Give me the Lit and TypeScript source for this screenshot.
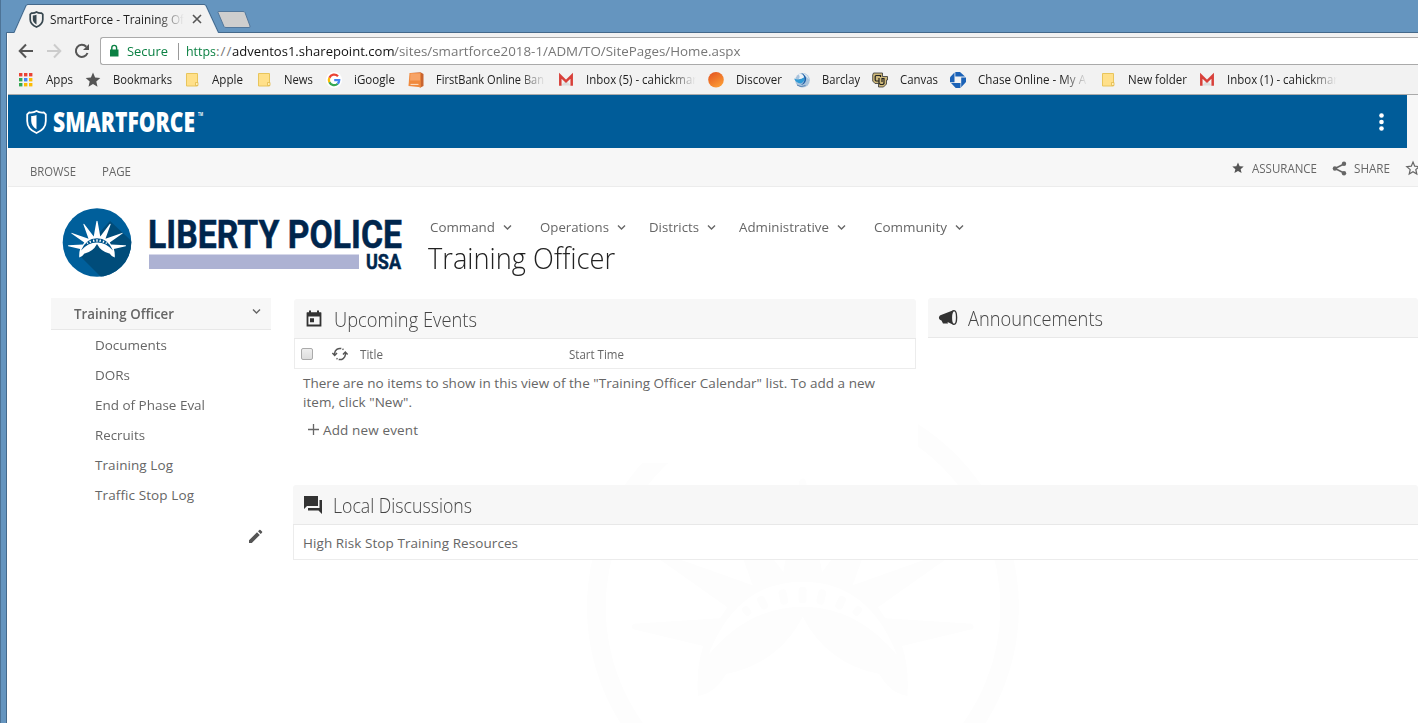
import { LitElement, html, css, svg, nothing } from "lit";
import { customElement, property } from "lit/decorators.js";

/* Single-line label fitted to a given width: condensed when too long, tracked out when too short. */
@customElement("fit-label")
class FitLabel extends LitElement {
  @property() text = "";
  @property({ type: Number }) w = 0;
  static styles = css`
    :host { display: block; white-space: pre; flex: none; }
    span { display: inline-block; transform-origin: 0 50%; }
  `;
  updated() {
    const s = this.renderRoot.querySelector("span") as HTMLElement;
    s.style.letterSpacing = "0";
    s.style.transform = "none";
    const natural = s.getBoundingClientRect().width;
    if (natural > this.w) {
      s.style.transform = `scaleX(${this.w / natural})`;
    } else {
      s.style.letterSpacing = `${(this.w - natural) / Math.max(1, this.text.length - 1)}px`;
    }
    this.style.width = `${this.w}px`;
  }
  render() {
    return html`<span>${this.text}</span>`;
  }
}

const crown = svg`
  <path d="M384 888 Q378 800 400 738 L190 688 Q180 680 190 671 L450 655 L472 622 L246 462 Q240 448 256 452 L548 556 L456 300 Q460 284 472 296 L640 516 L688 244 Q698 226 708 244 L756 516 L924 296 Q936 284 940 300 L848 556 L1140 452 Q1156 448 1150 462 L924 622 L946 655 L1206 671 Q1216 680 1206 688 L996 738 Q1018 800 1012 888 Q960 880 928 822 Q770 790 698 650 Q626 790 468 822 Q436 880 384 888Z"/>`;
const band = svg`<path d="M415 765 Q500 545 698 545 Q896 545 981 765 Q860 620 698 620 Q536 620 415 765Z"/>`;
const beads = svg`
  <rect x="686" y="560" width="24" height="50" rx="11"/>
  <rect x="742" y="568" width="24" height="46" rx="11" transform="rotate(12 754 590)"/>
  <rect x="628" y="568" width="24" height="46" rx="11" transform="rotate(-12 640 590)"/>
  <rect x="800" y="587" width="24" height="42" rx="11" transform="rotate(24 812 608)"/>
  <rect x="566" y="587" width="24" height="42" rx="11" transform="rotate(-28 578 608)"/>
  <rect x="851" y="618" width="22" height="30" rx="10" transform="rotate(38 862 633)"/>
  <rect x="519" y="618" width="22" height="30" rx="10" transform="rotate(-38 530 633)"/>`;

const folder = html`<svg width="16" height="16" viewBox="0 0 16 16"><path d="M2.500 1.500h11v12.500h-11z" fill="#ffe08a" stroke="#e8c55c"/><path d="M11.500 10.500h2.500v3h-2.500z" fill="#fff0b8" stroke="#e3b94a" stroke-width=".8"/></svg>`;
const gmail = html`<svg width="16" height="16" viewBox="0 0 16 16"><path d="M1.500 3h13v10.500h-13z" fill="#f1f1f1"/><path d="M3 13.500L8 8.500l5 5z" fill="#ddd"/><path d="M2.300 13.800V3.800L8 9.300l5.700-5.500v10" fill="none" stroke="#d8403a" stroke-width="2.500"/></svg>`;
const dots = ["#ea4335", "#ea4335", "#ea4335", "#34a853", "#4285f4", "#fbbc05", "#34a853", "#fbbc05", "#fbbc05"];

const bookmarks: { t: string; w: number; icon: unknown; box?: number }[] = [
  { t: "Apps", w: 27, icon: html`<svg width="16" height="16">${dots.map((c, i) => svg`<rect x=${1 + (i % 3) * 5} y=${1 + Math.floor(i / 3) * 5} width="3.400" height="3.400" fill=${c}/>`)}</svg>` },
  { t: "Bookmarks", w: 59, icon: html`<svg width="16" height="16" viewBox="0 0 16 16"><path d="M8 .6l2.100 4.900 5.200.5-4 3.400 1.200 5.300L8 11.900l-4.500 2.800 1.200-5.300-4-3.400 5.200-.5z" fill="#555"/></svg>` },
  { t: "Apple", w: 31, box: 32, icon: folder },
  { t: "News", w: 29, box: 30, icon: folder },
  { t: "iGoogle", w: 41, box: 42, icon: html`<svg width="16" height="16" viewBox="0 0 16 16"><circle cx="8" cy="8" r="8" fill="#fff"/><g fill="none" stroke-width="2.300"><path d="M12 4.300A5.200 5.200 0 0 0 3.400 5.800" stroke="#ea4335"/><path d="M3.400 5.800a5.200 5.200 0 0 0 0 4.500" stroke="#fbbc05"/><path d="M3.400 10.300a5.200 5.200 0 0 0 8.300 1.400" stroke="#34a853"/><path d="M11.700 11.700A5.200 5.200 0 0 0 13.200 8.200H8.200" stroke="#4285f4"/></g></svg>` },
  { t: "FirstBank Online Ban", w: 108, box: 110, icon: html`<svg width="16" height="16" viewBox="0 0 16 16"><path d="M2.500 1l10-.7 3 1.700v12l-3.500 1.700z" fill="#c8642f"/><path d="M1.500 1h11.300v14.200L.5 14z" fill="#f08a3e"/><path d="M2.500 1.500h9.500v7H2z" fill="#f7a468"/><path d="M2.500 12.400h8" stroke="#fde3cf"/></svg>` },
  { t: "Inbox (5) - cahickmar", w: 111, box: 110, icon: gmail },
  { t: "Discover", w: 46, icon: html`<svg width="16" height="16" viewBox="0 0 16 16"><defs><linearGradient id="dg" x1="0" y1="0" x2=".6" y2="1"><stop offset="0" stop-color="#e2501f"/><stop offset="1" stop-color="#fb9a35"/></linearGradient></defs><circle cx="8" cy="7.800" r="7.800" fill="url(#dg)"/></svg>` },
  { t: "Barclay", w: 38, icon: html`<svg width="16" height="16" viewBox="0 0 16 16"><circle cx="8.500" cy="8.300" r="7.300" fill="#a9c3dc"/><path d="M9 1.500q5 1 6 6-2-3-5-3.500z" fill="#dce8f2"/><path d="M0 6.500Q5 9 10.500 5q.8 4-3.500 6.500Q2 11 0 6.500z" fill="#2f9ad6"/><path d="M4 1.500q5 0 6.500 3.500Q8 7 4.500 7.300 7 5 4 1.500z" fill="#e9f1f8"/><path d="M7 .8q6 2.700 5 7.500-.8 4-5.500 4.900 4-2.500 4-6T7 .8z" fill="#1b5fa8"/><path d="M3 13q4 3 8.500.5" fill="none" stroke="#5b86b4"/></svg>` },
  { t: "Canvas", w: 38, icon: html`<svg width="16" height="16" viewBox="0 0 16 16"><path d="M1.500 1h9v3.500h5V8h-1v4l-3 3h-5v-3.500H3L.7 9V3z" fill="#cdb87a" stroke="#333" stroke-width=".8"/><path d="M8.500 5V3.500H4L3.200 4.500V8L4 9h3M7 6v5.500l1.500 1h2.500l1-1V6.500H10V10" fill="none" stroke="#222" stroke-width="1.200"/></svg>` },
  { t: "Chase Online - My A", w: 108, box: 110, icon: html`<svg width="16" height="16" viewBox="0 0 16 16"><g fill="#1b62b7"><path d="M5.300 0H10l5 4.500H5.300z"/><path d="M11.200 5.500H16V10l-4.800 5.300z"/><path d="M10.500 11v5H5.700L1 11z"/><path d="M4.500 10.300H0V5.200L4.500.6z"/></g></svg>` },
  { t: "New folder", w: 59, icon: folder },
  { t: "Inbox (1) - cahickmar", w: 111, box: 110, icon: gmail },
];

const nav = [
  { t: "Command", w: 65, pad: 27.5 },
  { t: "Operations", w: 69, pad: 23.5 },
  { t: "Districts", w: 50, pad: 23 },
  { t: "Administrative", w: 90, pad: 27.5 },
  { t: "Community", w: 73, pad: 0 },
];
const side = [
  { t: "Documents", w: 72 },
  { t: "DORs", w: 35 },
  { t: "End of Phase Eval", w: 110 },
  { t: "Recruits", w: 50 },
  { t: "Training Log", w: 78 },
  { t: "Traffic Stop Log", w: 99 },
];

@customElement("app-root")
class AppRoot extends LitElement {
  static styles = css`
    :host { display: block; width: 1418px; height: 723px; overflow: hidden; font-family: "Open Sans", "Noto Sans", sans-serif; font-size: 13.500px; color: #666; background: #6595bf; }
    * { box-sizing: border-box; }
    svg { display: block; flex: none; overflow: visible; }
    .tabs { height: 33px; position: relative; }
    .tabshape { position: absolute; left: 0; top: 0; }
    .tab { position: relative; display: flex; align-items: center; height: 33px; padding: 5px 0 0 29px; color: #222; font-size: 12px; }
    .tab .fade { margin: 0 8px 0 6px; width: 134px; }
    .fade { overflow: hidden; -webkit-mask-image: linear-gradient(90deg, #000 calc(100% - 26px), transparent); }
    .frame { display: flex; height: 690px; }
    .edge { width: 8px; flex: none; background: linear-gradient(90deg, #4d7396 0 1px, #6595bf 1px 6px, #45698b 6px 7px, #fff 7px 8px); }
    .win { flex: 1; min-width: 0; background: #fff; }
    .toolbar { height: 32px; background: #f2f2f2; display: flex; align-items: center; padding: 4px 0 0 10px; }
    .toolbar > svg { margin-right: 12px; }
    .omni { flex: 1; margin-left: -2px; height: 28px; background: #fff; border: 1px solid #aaa; border-right: 0; border-radius: 3px 0 0 3px; display: flex; align-items: center; font-size: 13.500px; padding-left: 8px; line-height: 20px; }
    .green { color: #0b8043; }
    .grey { color: #777; }
    .black { color: #111; }
    .sep { width: 1px; height: 17px; background: #999; margin: 0 7px 0 10px; }
    .sec { margin-left: 8px; }
    .marks { height: 30px; background: #f2f2f2; border-bottom: 1px solid #aaa; display: flex; align-items: center; padding-left: 10px; font-size: 12px; color: #222; }
    .mark { display: flex; align-items: center; gap: 12px; margin-right: 12px; flex: none; }
    .brand { height: 53px; background: #f7f7f7; }
    .blue { width: 1399px; height: 53px; background: #005c99; display: flex; align-items: center; justify-content: space-between; padding: 0 23.500px 0 18px; }
    .ribbon { height: 39px; background: #f7f7f7; border-bottom: 1px solid #ececec; display: flex; align-items: center; font-size: 12.500px; padding: 8px 0 0 22px; }
    .ribbon .page { margin-left: 26px; }
    .acts { margin: -6px -3px 0 auto; display: flex; align-items: center; }
    .a1 { margin-left: 8px; margin-right: 15px; }
    .a2 { margin-left: 7px; margin-right: 15px; }
    .site { height: 536px; position: relative; overflow: hidden; }
    .wm { position: absolute; left: 562px; top: 213px; }
    .masthead { position: relative; display: flex; padding: 18px 0 0 52px; height: 111px; }
    .titles { padding: 12px 0 0 17px; }
    .nav { display: flex; height: 20px; align-items: center; }
    .nav fit-label { margin-right: 8px; }
    .h1 { font-size: 29.500px; font-weight: 300; color: #222; line-height: 36px; margin: 3px 0 0 -2px; }
    .cols { position: relative; display: flex; }
    .side { width: 220px; margin-left: 43px; flex: none; }
    .top { height: 32px; background: #f7f7f7; border-bottom: 1px solid #e8e8e8; display: flex; justify-content: space-between; align-items: center; padding: 0 9px 0 23px; font-weight: 600; }
    .top svg { margin-top: -4px; }
    .items { padding-left: 44px; }
    .items fit-label { height: 30px; line-height: 30px; }
    .pencil { margin: 19px 0 0 197px; }
    .main { flex: 1; margin-left: 22px; min-width: 0; }
    .row { display: flex; height: 187px; }
    .events { width: 625px; padding: 1px 2px 0 1px; height: 165px; background: #fff; flex: none; }
    .ph { height: 40px; background: #f7f7f7; border-bottom: 1px solid #e8e8e8; border-radius: 3px 3px 0 0; display: flex; align-items: center; font-size: 21px; font-weight: 300; color: #444; line-height: 30px; }
    .ph svg { margin: 0 10px; }
    .ph fit-label { margin-top: 1px; margin-left: -.500px; }
    .th { height: 30px; border: 1px solid #ececec; border-top: 0; display: flex; align-items: center; font-size: 12px; padding: 1px 0 0 6px; }
    .cb { width: 12px; height: 12px; border: 1px solid #aaa; border-radius: 2px; background: linear-gradient(#eee, #ddd); margin-right: 19px; }
    .th svg { margin-right: 12px; }
    .st { margin-left: 185.500px; }
    .empty { padding: 5px 0 0 9px; line-height: 19px; }
    .add { display: flex; align-items: center; height: 20px; margin: 8px 0 0 14px; }
    .add svg { margin: -2px 4px 0 0; }
    .ann { flex: 1; margin-left: 10px; }
    .local { background: #fff; }
    .topic { height: 35px; border: 1px solid #ececec; border-width: 0 0 1px 1px; display: flex; align-items: center; padding: 2px 0 0 9px; }
  `;

  chev(w = 9) {
    return html`<svg width=${w} height="7" viewBox="0 0 9 7"><path d="M1 1.500L4.500 5 8 1.500" fill="none" stroke="#666" stroke-width="1.400"/></svg>`;
  }
  shield(w: number, h: number, stroke: string) {
    return html`<svg width=${w} height=${h} viewBox="0 0 21 24"><path d="M10.500 1.300C8.500 2.600 5.500 3.200 3.400 2.900L1.600 4.600V12c0 5 4 8.500 8.900 10.700 4.900-2.200 8.900-5.700 8.900-10.700V4.600l-1.800-1.700c-2.100.3-5.100-.3-7.100-1.600z" fill="none" stroke=${stroke} stroke-width="2.400"/><path d="M10.500 5.200C8.700 6 7 6.200 5.300 6.200V12c0 3.200 2.300 5.300 5.200 6.900z" fill=${stroke}/></svg>`;
  }

  render() {
    return html`
      <div class="tabs">
        <svg class="tabshape" width="1418" height="33">
          <path d="M0 0v33" stroke="#4d7396" stroke-width="2"/>
          <path d="M6.500 33V32.500H14L26 5.500q.5-1 2-1H204q1.500 0 2 1L218.500 32.500H1418" fill="none" stroke="#45698b"/>
          <path d="M14.500 33L26.500 6q.5-1 2-1H203.500q1.500 0 2 1L218 33z" fill="#f2f2f2"/>
          <path d="M218 12.500q-.5-1 1-1h24q1.500 0 2 1l5 13.500q.5 1.500-1 1.500h-23q-1.500 0-2-1z" fill="#cecece" stroke="#52779b"/>
        </svg>
        <div class="tab">
          ${this.shield(15, 17, "#37474f")}
          <div class="fade"><fit-label text="SmartForce - Training Offi" w="141"></fit-label></div>
          <svg width="10" height="10"><path d="M1 1l8 8M9 1L1 9" stroke="#555" stroke-width="1.600"/></svg>
        </div>
      </div>
      <div class="frame">
        <div class="edge"></div>
        <div class="win">
          <div class="toolbar">
            <svg width="16" height="16"><path d="M15 8H2M8 1.500L1.700 8 8 14.500" fill="none" stroke="#555" stroke-width="2"/></svg>
            <svg width="16" height="16"><path d="M1 8h13M8 1.500L14.300 8 8 14.500" fill="none" stroke="#ccc" stroke-width="2"/></svg>
            <svg width="16" height="16"><path d="M13.500 10A6 6 0 1 1 12.300 3.800" fill="none" stroke="#555" stroke-width="2"/><path d="M15 1v6H9z" fill="#555"/></svg>
            <div class="omni">
              <svg width="10" height="14" viewBox="0 0 10 14"><path d="M1 5.500h8.500V12.500H1z" fill="#0b8043"/><path d="M2.800 6V3.800a2.400 2.400 0 0 1 4.800 0V6" fill="none" stroke="#0b8043" stroke-width="1.400"/></svg>
              <fit-label class="green sec" text="Secure" w="41"></fit-label>
              <div class="sep"></div>
              <fit-label class="green" text="https" w="30"></fit-label>
              <fit-label class="grey" text="://" w="15.500"></fit-label>
              <fit-label class="black" text="adventos1.sharepoint.com" w="162.500"></fit-label>
              <fit-label class="grey" text="/sites/smartforce2018-1/ADM/TO/SitePages/Home.aspx" w="346.500"></fit-label>
            </div>
          </div>
          <div class="marks">
            ${bookmarks.map(
              (b) => html`<div class="mark">${b.icon}
                <div class=${(b.box ?? b.w) >= 110 ? "fade" : ""} style="width:${b.box ?? b.w}px"><fit-label text=${b.t} w=${b.w}></fit-label></div>
              </div>`
            )}
          </div>
          <div class="brand"><div class="blue">
            <svg width="180" height="30" viewBox="0 0 180 30">
              <path d="M10.500 4C8.500 5.300 5.500 5.800 3.200 5.500L1.200 7.300V14c0 6 4 9.800 9.300 12 5.300-2.200 9.300-6 9.300-12V7.300l-2-1.800C15.500 5.800 12.500 5.300 10.500 4z" fill="none" stroke="#fff" stroke-width="1.800"/>
              <path d="M10.500 8C9 8.700 7 9 5.200 9v5c0 3.500 2.200 6.500 5.300 8.200z" fill="#fff"/>
              <text x="27" y="25" textLength="142" lengthAdjust="spacingAndGlyphs" font-size="28" font-weight="800" font-family="Open Sans" fill="#fff">SMARTFORCE</text>
              <text x="172" y="9" textLength="5" lengthAdjust="spacingAndGlyphs" font-size="4.500" font-weight="700" fill="#fff">TM</text>
            </svg>
            <svg width="5" height="18"><circle cx="2.500" cy="2.500" r="2.300" fill="#fff"/><circle cx="2.500" cy="9" r="2.300" fill="#fff"/><circle cx="2.500" cy="15.500" r="2.300" fill="#fff"/></svg>
          </div></div>
          <div class="ribbon">
            <fit-label text="BROWSE" w="46"></fit-label>
            <fit-label class="page" text="PAGE" w="29"></fit-label>
            <div class="acts">
              <svg width="12" height="12" viewBox="0 0 16 16"><path d="M8 .5l2.200 5 5.400.5-4.100 3.500 1.300 5.300L8 12l-4.800 2.800 1.300-5.300L.4 6l5.400-.5z" fill="#555"/></svg>
              <fit-label class="a1" text="ASSURANCE" w="65"></fit-label>
              <svg width="15" height="15" viewBox="0 0 15 15"><path d="M12 3L3 7.500l9 4.500" fill="none" stroke="#666" stroke-width="1.600"/><g fill="#666"><circle cx="12" cy="2.700" r="2.200"/><circle cx="2.900" cy="7.500" r="2.200"/><circle cx="12" cy="12.300" r="2.200"/></g></svg>
              <fit-label class="a2" text="SHARE" w="36"></fit-label>
              <svg width="16" height="16" viewBox="0 0 16 16"><path d="M8 2l1.700 4.200 4.500.4-3.400 3 1 4.400L8 11.700 4.200 14l1-4.400-3.400-3 4.500-.4z" fill="none" stroke="#666" stroke-width="1.200"/></svg>
            </div>
          </div>
          <div class="site">
            <svg class="wm" width="480" height="323" viewBox="0 0 1440 969">
              <ellipse cx="699" cy="622" rx="620" ry="621" fill="none" stroke="#fdfdfd" stroke-width="56"/>
              <g fill="#fdfdfd">${crown}</g><g fill="#fff">${band}</g><g fill="#fdfdfd">${beads}</g>
            </svg>
            <div class="masthead">
              <svg width="353" height="78" viewBox="0 0 353 78">
                <defs><clipPath id="disc"><circle cx="37" cy="37.500" r="34.300"/></clipPath></defs>
                <circle cx="37" cy="37.500" r="34.300" fill="#005f9b"/>
                <path clip-path="url(#disc)" d="M19 50L46 77H80V44L50 16z" fill="#004c7a"/>
                <g transform="translate(37 40.800) scale(.0565) translate(-698 -680)"><g fill="#fff">${crown}</g><g fill="#00558c">${band}</g><g fill="#fff">${beads}</g></g>
                <g font-family="Roboto" font-weight="700" fill="#00264d" stroke="#00264d" stroke-width=".5">
                  <text x="88" y="43" font-size="38.500" textLength="254" lengthAdjust="spacingAndGlyphs">LIBERTY POLICE</text>
                  <text x="306" y="64" font-size="20.500" textLength="35" lengthAdjust="spacingAndGlyphs">USA</text>
                </g>
                <path d="M89 49.500h210v14.500H89z" fill="#adb2d3"/>
              </svg>
              <div class="titles">
                <div class="nav">${nav.map((n) => html`<fit-label text=${n.t} w=${n.w}></fit-label>${this.chev()}${n.pad ? html`<div style="width:${n.pad}px"></div>` : nothing}`)}</div>
                <fit-label class="h1" text="Training Officer" w="187"></fit-label>
              </div>
            </div>
            <div class="cols">
              <div class="side">
                <div class="top"><fit-label text="Training Officer" w="100"></fit-label>${this.chev(11)}</div>
                <div class="items">${side.map((s) => html`<fit-label text=${s.t} w=${s.w}></fit-label>`)}</div>
                <svg class="pencil" width="15" height="15" viewBox="0 0 15 15"><path d="M1 11.200L9 3.200l2.800 2.800-8 8H1zM10 2.300l1.300-1.300q.6-.5 1.200 0L14 2.500q.5.600 0 1.200L12.700 5z" fill="#555"/></svg>
              </div>
              <div class="main">
                <div class="row">
                  <div class="events">
                    <div class="ph"><svg width="20" height="20" viewBox="0 0 20 20"><path d="M3.500 4.500h13v12h-13z" fill="none" stroke="#333" stroke-width="1.800"/><path d="M3 3.500h14V7.500H3zM5 1.500h2v3H5zM13 1.500h2v3h-2zM6 9.200h4v4H6z" fill="#333"/></svg><fit-label text="Upcoming Events" w="143"></fit-label></div>
                    <div class="th">
                      <div class="cb"></div>
                      <svg width="16" height="14" viewBox="0 0 16 14"><g fill="none" stroke="#555" stroke-width="1.500"><path d="M2.600 8V6.500A5.400 5.400 0 0 1 9.300 1.600"/><path d="M13.400 6v1.500A5.400 5.400 0 0 1 6.700 12.400"/><path d="M.4 6l2.300 2.400L5 6M11 7.500l2.300-2.400L15.600 7.500"/><path d="M10.500 2l1 .6M5.500 12l-1-.6"/></g></svg>
                      <fit-label text="Title" w="23"></fit-label>
                      <fit-label class="st" text="Start Time" w="55"></fit-label>
                    </div>
                    <div class="empty">
                      <fit-label text=${'There are no items to show in this view of the "Training Officer Calendar" list. To add a new'} w="572"></fit-label>
                      <fit-label text=${'item, click "New".'} w="109"></fit-label>
                    </div>
                    <div class="add"><svg width="11" height="11"><path d="M5.500 0v11M0 5.500h11" stroke="#666" stroke-width="1.300"/></svg><fit-label text="Add new event" w="95"></fit-label></div>
                  </div>
                  <div class="ann">
                    <div class="ph"><svg width="20" height="18" viewBox="0 0 20 18"><path d="M16 1L3 6Q.5 7 1 9.500 1.500 11 3.500 11.500L5 14.500h5l-.5-1.500L16 16z" fill="#333"/><ellipse cx="16" cy="8.500" rx="2.600" ry="6.900" fill="#f7f7f7" stroke="#333" stroke-width="1.400"/></svg><fit-label text="Announcements" w="135"></fit-label></div>
                  </div>
                </div>
                <div class="local">
                  <div class="ph"><svg width="20" height="20" viewBox="0 0 20 20"><path d="M1 1h14v10H4l-3 3z" fill="#333"/><path d="M16.500 5H19v14l-3.500-3.500H5V13h11.500z" fill="#333"/></svg><fit-label text="Local Discussions" w="139"></fit-label></div>
                  <div class="topic"><fit-label text="High Risk Stop Training Resources" w="215"></fit-label></div>
                </div>
              </div>
            </div>
          </div>
        </div>
      </div>
    `;
  }
}
